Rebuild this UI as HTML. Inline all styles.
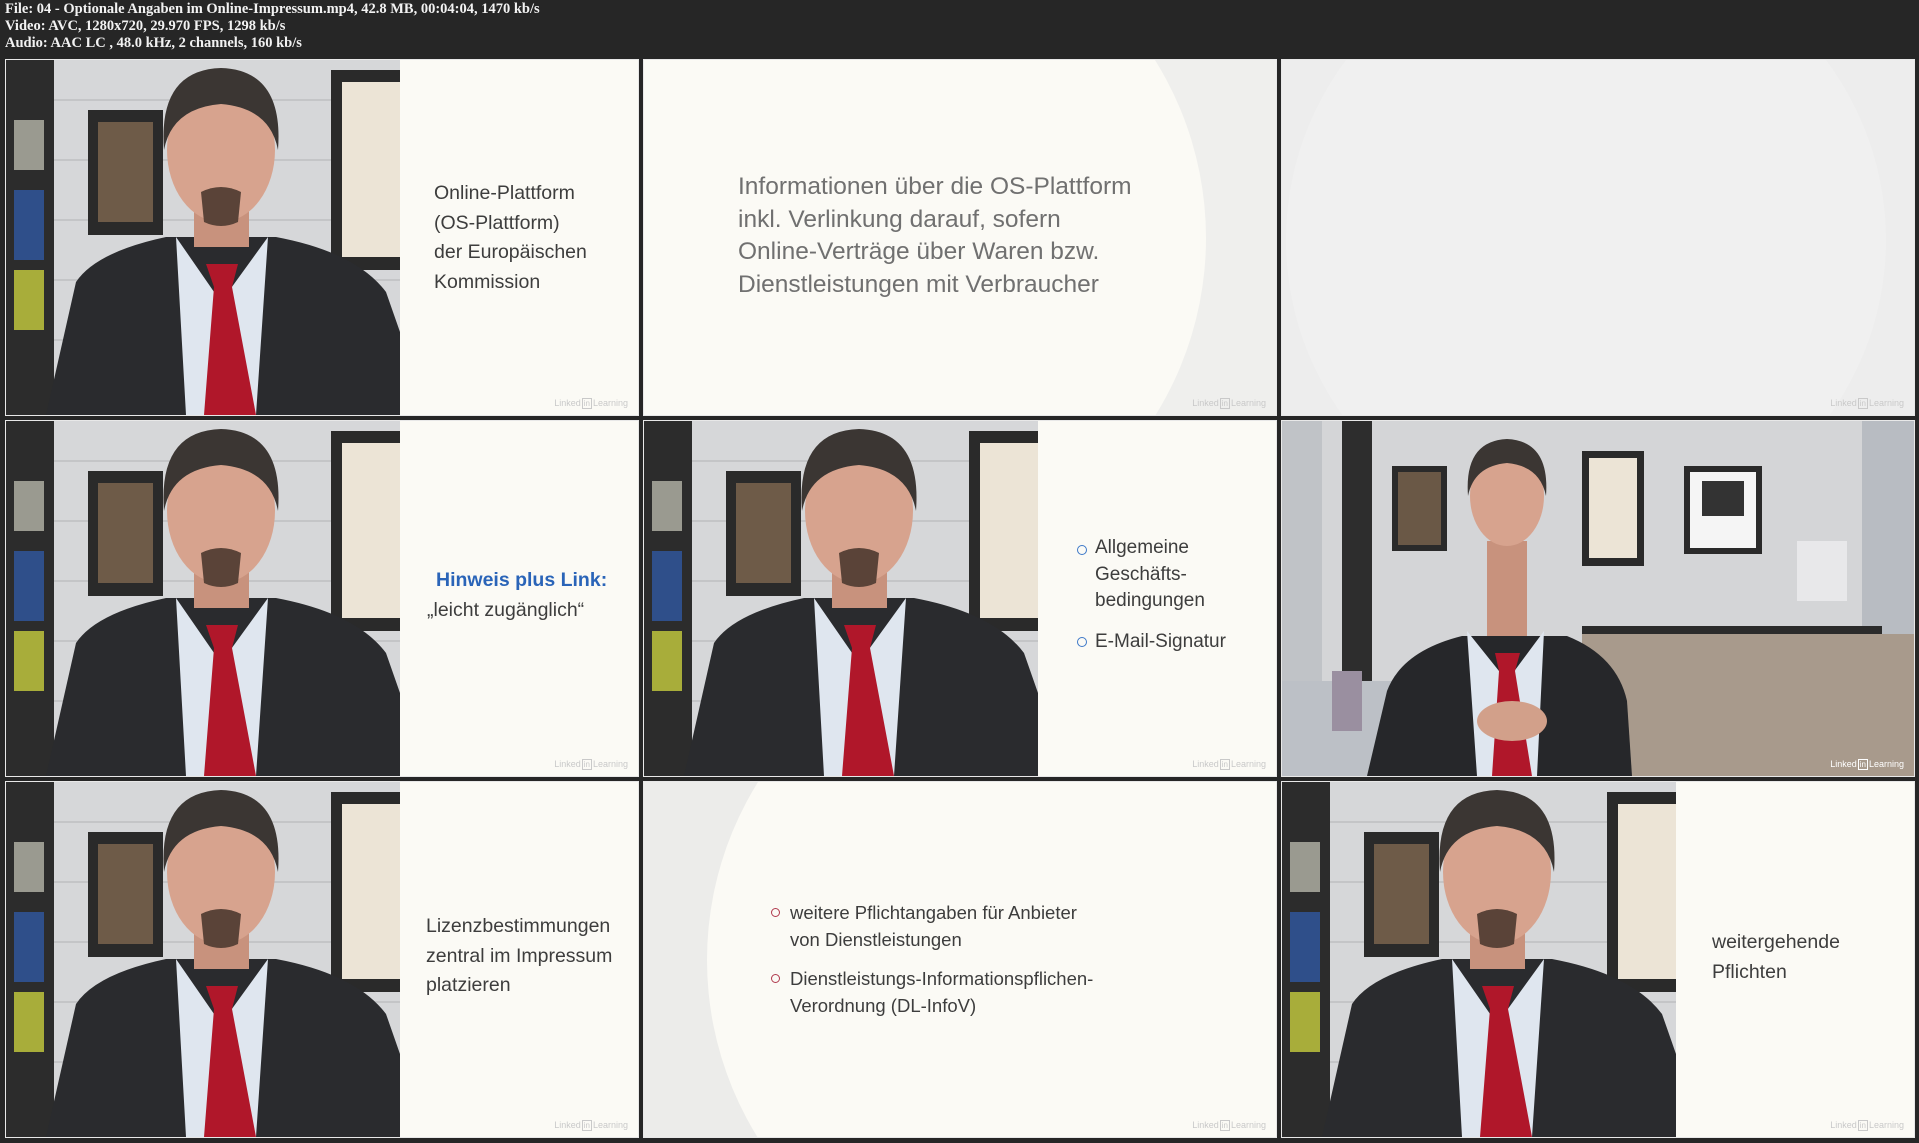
<!DOCTYPE html>
<html><head><meta charset="utf-8"><style>
*{margin:0;padding:0;box-sizing:border-box}
html,body{width:1919px;height:1143px;overflow:hidden}
body{background:#262626;position:relative;font-family:"Liberation Sans",sans-serif}
.hd{position:absolute;left:5px;color:#f2f2f2;font:bold 14.5px "Liberation Serif",serif;white-space:nowrap}
.f{position:absolute;width:632px;height:355px;overflow:hidden;background:#fbfaf5;outline:1px solid #e8e8e8}
.vid{position:absolute;left:0;top:0;width:394px;height:355px}
.t{position:absolute;white-space:nowrap;color:#3d3d3d;font-size:19.5px;line-height:29.7px}
.logo{position:absolute;right:10px;bottom:6px;font-size:9px;color:#c9c9c9;white-space:nowrap}
.logo b{display:inline-block;border:1px solid #c9c9c9;padding:0 1px;margin:0 1px;font-weight:normal;font-size:8px}
.circ{position:absolute;border-radius:50%;background:#fbfaf5}
.bl{position:absolute;width:10px;height:10px;border:1.6px solid #3d78c8;border-radius:50%}
</style></head><body>
<div class="hd" style="top:1px">File: 04 - Optionale Angaben im Online-Impressum.mp4, 42.8 MB, 00:04:04, 1470 kb/s</div>
<div class="hd" style="top:18px">Video: AVC, 1280x720, 29.970 FPS, 1298 kb/s</div>
<div class="hd" style="top:35px">Audio: AAC LC , 48.0 kHz, 2 channels, 160 kb/s</div>

<svg width="0" height="0" style="position:absolute"><defs>
<g id="p">
<rect width="394" height="355" fill="#d6d7d9"/>
<g stroke="#c4c5c7" stroke-width="2"><line x1="40" y1="40" x2="394" y2="40"/><line x1="40" y1="100" x2="394" y2="100"/><line x1="40" y1="160" x2="394" y2="160"/><line x1="40" y1="220" x2="394" y2="220"/><line x1="40" y1="280" x2="394" y2="280"/></g>
<rect x="0" y="0" width="48" height="355" fill="#2c2c2c"/>
<rect x="8" y="130" width="30" height="70" fill="#2f4f8a"/>
<rect x="8" y="210" width="30" height="60" fill="#a8ad3a"/>
<rect x="8" y="60" width="30" height="50" fill="#9a9a90"/>
<rect x="82" y="50" width="75" height="125" fill="#2a2a2a"/>
<rect x="92" y="62" width="55" height="100" fill="#6e5b48"/>
<rect x="325" y="10" width="69" height="200" fill="#2a2a2a"/>
<rect x="336" y="22" width="58" height="175" fill="#ece4d6"/>
<g transform="translate(0,-28)">
<path d="M40 383 L70 250 Q90 220 160 205 L270 205 Q350 220 380 260 L394 300 L394 383 Z" fill="#2a2b2e"/>
<polygon points="170,205 215,270 262,205 250,383 180,383" fill="#dfe6ef"/>
<rect x="188" y="165" width="55" height="50" fill="#c8927d"/>
<polygon points="200,232 232,232 226,255 250,383 198,383 208,255" fill="#b0172a"/>
<ellipse cx="215" cy="118" rx="54" ry="72" fill="#d7a38e"/>
<path d="M158 118 Q152 38 215 36 Q278 38 272 118 Q264 76 215 72 Q166 76 158 118Z" fill="#3b3633"/>
<path d="M195 160 Q215 150 235 160 L232 190 Q215 198 198 190Z" fill="#5a4338"/>
</g>
</g>
</defs></svg>

<!-- Row 1 -->
<div class="f" style="left:6px;top:60px">
<svg class="vid" viewBox="0 0 394 355"><use href="#p"/></svg>
<div class="t" style="left:428px;top:119px">Online-Plattform<br>(OS-Plattform)<br>der Europäischen<br>Kommission</div>
<div class="logo">Linked<b>in</b>Learning</div></div>

<div class="f" style="left:644px;top:60px;background:#efefed">
<div class="circ" style="left:-110px;top:-158px;width:672px;height:672px"></div>
<div class="t" style="left:94px;top:111px;font-size:24.5px;line-height:32.7px;color:#707070">Informationen über die OS-Plattform<br>inkl. Verlinkung darauf, sofern<br>Online-Verträge über Waren bzw.<br>Dienstleistungen mit Verbraucher</div>
<div class="logo">Linked<b>in</b>Learning</div></div>

<div class="f" style="left:1282px;top:60px;background:#ededed">
<div class="circ" style="left:4px;top:-120px;width:600px;height:600px;background:#f0f0f0"></div>
<div class="logo">Linked<b>in</b>Learning</div></div>

<!-- Row 2 -->
<div class="f" style="left:6px;top:421px">
<svg class="vid" viewBox="0 0 394 355"><use href="#p"/></svg>
<div class="t" style="left:430px;top:145px;color:#2a64b8;font-weight:bold">Hinweis plus Link:</div>
<div class="t" style="left:421px;top:175px">„leicht zugänglich“</div>
<div class="logo">Linked<b>in</b>Learning</div></div>

<div class="f" style="left:644px;top:421px">
<svg class="vid" viewBox="0 0 394 355"><use href="#p"/></svg>
<div class="bl" style="left:433px;top:124px"></div>
<div class="bl" style="left:433px;top:216px"></div>
<div class="t" style="left:451px;top:114px;font-size:19px;line-height:26.5px">Allgemeine<br>Geschäfts-<br>bedingungen</div>
<div class="t" style="left:451px;top:206px;font-size:19px">E-Mail-Signatur</div>
<div class="logo">Linked<b>in</b>Learning</div></div>

<div class="f" style="left:1282px;top:421px;background:#d3d4d6">
<svg viewBox="0 0 632 355" width="632" height="355" style="position:absolute;left:0;top:0">
<rect width="632" height="355" fill="#d4d5d7"/>
<rect x="0" y="0" width="40" height="355" fill="#c0c3c7"/>
<rect x="60" y="0" width="30" height="300" fill="#2d2d2d"/>
<rect x="110" y="45" width="55" height="85" fill="#2a2a2a"/><rect x="116" y="51" width="43" height="73" fill="#6a5846"/>
<rect x="300" y="30" width="62" height="115" fill="#2a2a2a"/><rect x="307" y="37" width="48" height="100" fill="#ece4d6"/>
<rect x="402" y="45" width="78" height="88" fill="#2a2a2a"/><rect x="408" y="51" width="66" height="76" fill="#f5f5f5"/><rect x="420" y="60" width="42" height="35" fill="#333"/>
<rect x="580" y="0" width="52" height="355" fill="#b8bcc2"/>
<rect x="300" y="205" width="300" height="8" fill="#2b2b2b"/>
<rect x="515" y="120" width="50" height="60" fill="#e8e8ea"/>
<rect x="300" y="213" width="332" height="142" fill="#a89a8c"/>
<rect x="0" y="260" width="120" height="95" fill="#bcc0c6"/>
<rect x="50" y="250" width="30" height="60" fill="#9a8fa0"/>
<path d="M85 355 L105 270 Q120 230 180 215 L285 215 Q335 235 345 280 L350 355 Z" fill="#26272a"/>
<polygon points="185,210 225,260 262,210 255,355 195,355" fill="#dfe6ef"/>
<rect x="205" y="120" width="40" height="95" fill="#c8927d"/>
<polygon points="213,232 238,232 233,250 250,355 210,355 217,250" fill="#b0172a"/>
<ellipse cx="225" cy="75" rx="37" ry="50" fill="#d7a38e"/>
<path d="M186 75 Q182 20 225 18 Q268 20 264 75 Q258 45 225 42 Q192 45 186 75Z" fill="#3b3633"/>
<ellipse cx="230" cy="300" rx="35" ry="20" fill="#d2a08a"/>
</svg>
<div class="logo" style="color:#fff">Linked<b style="border-color:#fff">in</b>Learning</div></div>

<!-- Row 3 -->
<div class="f" style="left:6px;top:782px">
<svg class="vid" viewBox="0 0 394 355"><use href="#p"/></svg>
<div class="t" style="left:420px;top:130px">Lizenzbestimmungen<br>zentral im Impressum<br>platzieren</div>
<div class="logo">Linked<b>in</b>Learning</div></div>

<div class="f" style="left:644px;top:782px;background:#ececea">
<div class="circ" style="left:63px;top:-158px;width:672px;height:672px"></div>
<div class="bl" style="left:127px;top:126px;border-color:#b03a4e;width:9px;height:9px"></div>
<div class="bl" style="left:127px;top:192px;border-color:#b03a4e;width:9px;height:9px"></div>
<div class="t" style="left:146px;top:117px;font-size:18.5px;line-height:27px">weitere Pflichtangaben für Anbieter<br>von Dienstleistungen</div>
<div class="t" style="left:146px;top:183px;font-size:18.5px;line-height:27px">Dienstleistungs-Informationspflichen-<br>Verordnung (DL-InfoV)</div>
<div class="logo">Linked<b>in</b>Learning</div></div>

<div class="f" style="left:1282px;top:782px">
<svg class="vid" viewBox="0 0 394 355"><use href="#p"/></svg>
<div class="t" style="left:430px;top:146px">weitergehende<br>Pflichten</div>
<div class="logo">Linked<b>in</b>Learning</div></div>
</body></html>
